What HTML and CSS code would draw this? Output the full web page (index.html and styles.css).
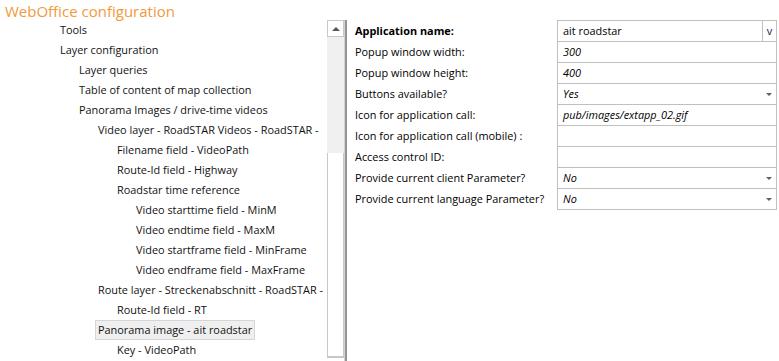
FILE: index.html
```html
<!DOCTYPE html>
<html>
<head>
<meta charset="utf-8">
<link rel="stylesheet" href="styles.css">
</head>
<body>
<div class="app">
  <h1 class="title">WebOffice configuration</h1>
  <div class="main">
    <div class="tree">
      <div class="node l1">Tools</div>
      <div class="node l1">Layer configuration</div>
      <div class="node l2">Layer queries</div>
      <div class="node l2">Table of content of map collection</div>
      <div class="node l2">Panorama Images / drive-time videos</div>
      <div class="node l3">Video layer - RoadSTAR Videos - RoadSTAR -</div>
      <div class="node l4">Filename field - VideoPath</div>
      <div class="node l4">Route-Id field - Highway</div>
      <div class="node l4">Roadstar time reference</div>
      <div class="node l5">Video starttime field - MinM</div>
      <div class="node l5">Video endtime field - MaxM</div>
      <div class="node l5">Video startframe field - MinFrame</div>
      <div class="node l5">Video endframe field - MaxFrame</div>
      <div class="node l3">Route layer - Streckenabschnitt - RoadSTAR -</div>
      <div class="node l4">Route-Id field - RT</div>
      <div class="node l3"><span class="selected">Panorama image - ait roadstar</span></div>
      <div class="node l4">Key - VideoPath</div>
    </div>
    <div class="scrollbar">
      <div class="sb-btn"><span class="sb-arrow"></span></div>
      <div class="sb-track"></div>
      <div class="sb-thumb"></div>
    </div>
    <div class="splitter"></div>
    <div class="form">
      <div class="frow">
        <div class="flabel strong">Application name:</div>
        <div class="fval combo"><span class="ctext">ait roadstar</span><span class="cbtn">v</span></div>
      </div>
      <div class="frow">
        <div class="flabel">Popup window width:</div>
        <div class="fval it">300</div>
      </div>
      <div class="frow">
        <div class="flabel">Popup window height:</div>
        <div class="fval it">400</div>
      </div>
      <div class="frow">
        <div class="flabel">Buttons available?</div>
        <div class="fval it select">Yes<span class="tri"></span></div>
      </div>
      <div class="frow">
        <div class="flabel">Icon for application call:</div>
        <div class="fval it">pub/images/extapp_02.gif</div>
      </div>
      <div class="frow">
        <div class="flabel">Icon for application call (mobile) :</div>
        <div class="fval it"></div>
      </div>
      <div class="frow">
        <div class="flabel">Access control ID:</div>
        <div class="fval it"></div>
      </div>
      <div class="frow">
        <div class="flabel">Provide current client Parameter?</div>
        <div class="fval it select">No<span class="tri"></span></div>
      </div>
      <div class="frow last">
        <div class="flabel">Provide current language Parameter?</div>
        <div class="fval it select">No<span class="tri"></span></div>
      </div>
    </div>
  </div>
</div>
</body>
</html>
```

FILE: styles.css
```css
html, body {
  margin: 0;
  padding: 0;
  background: #ffffff;
}
body {
  font-family: "Open Sans", "Noto Sans", sans-serif;
  font-size: 10.9px;
  color: #111111;
  width: 779px;
  height: 361px;
  overflow: hidden;
}
.app {
  display: flex;
  flex-direction: column;
  height: 361px;
}
.title {
  margin: 0;
  height: 20px;
  line-height: 22px;
  padding-left: 5px;
  font-size: 15px;
  font-weight: normal;
  color: #f09a3c;
  white-space: nowrap;
}
.main {
  display: flex;
  flex: 1;
  min-height: 0;
}
.tree {
  width: 327px;
  overflow: hidden;
  white-space: nowrap;
}
.node {
  height: 20px;
  line-height: 19px;
}
.l1 { padding-left: 60px; }
.l2 { padding-left: 79px; }
.l3 { padding-left: 98px; }
.l4 { padding-left: 117px; }
.l5 { padding-left: 136px; }
.node .selected {
  display: inline-block;
  box-sizing: border-box;
  height: 20px;
  line-height: 18px;
  margin-left: -3px;
  padding: 0 2px 0 2px;
  background: #efefef;
  border: 1px solid #d6d6d6;
}
.scrollbar {
  width: 17px;
  display: flex;
  flex-direction: column;
}
.sb-btn {
  box-sizing: border-box;
  height: 17px;
  border: 1px solid #c8c8c8;
  background: #ffffff;
  display: flex;
  align-items: center;
  justify-content: center;
}
.sb-arrow {
  width: 0;
  height: 0;
  border-left: 4px solid transparent;
  border-right: 4px solid transparent;
  border-bottom: 4px solid #555555;
}
.sb-track {
  height: 116px;
  background: #f0f0f0;
}
.sb-thumb {
  box-sizing: border-box;
  height: 205px;
  background: #ffffff;
  border: 1px solid #c8c8c8;
  border-top: none;
  border-bottom: 2px solid #c8c8c8;
}
.splitter {
  width: 2px;
  border-left: 1px solid #d4d4d4;
  background: #959595;
}
.form {
  flex: 1;
  padding-left: 8px;
}
.frow {
  display: flex;
  height: 21px;
}
.flabel {
  width: 202px;
  line-height: 22px;
  color: #000000;
  white-space: nowrap;
}
.flabel.strong {
  font-weight: bold;
}
.fval {
  box-sizing: border-box;
  width: 220px;
  height: 21px;
  border: 1px solid #c0c0c0;
  border-bottom: none;
  padding-left: 5px;
  line-height: 20px;
  color: #000000;
  display: flex;
  align-items: center;
  position: relative;
}
.frow.last .fval {
  height: 22px;
  border-bottom: 1px solid #c0c0c0;
}
.it {
  font-style: italic;
}
.combo {
  padding-right: 0;
}
.ctext {
  flex: 1;
}
.cbtn {
  width: 13px;
  height: 20px;
  border-left: 1px solid #c0c0c0;
  text-align: center;
  line-height: 19px;
  font-size: 11px;
  color: #202040;
}
.tri {
  position: absolute;
  right: 4px;
  top: 9px;
  width: 0;
  height: 0;
  border-left: 3px solid transparent;
  border-right: 3px solid transparent;
  border-top: 3px solid #606060;
}
```
